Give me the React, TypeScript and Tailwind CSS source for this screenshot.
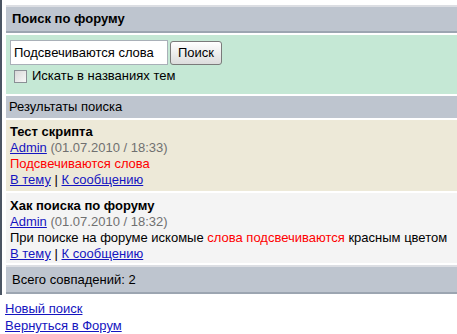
import React from "react";

const bar = "bg-[#bec5cf]";

export default function App() {
  return (
    <div
      className="w-[457px] h-[334px] overflow-hidden bg-white text-[13px] leading-[16px] text-black"
      style={{ fontFamily: '"Liberation Sans", Arial, sans-serif' }}
    >
      <div className="border-l-2 border-[#4b5563] pl-1 pt-[5px] pb-[1px] flex flex-col gap-[2px] w-[470px]">
        <div className={`${bar} border-t-2 border-t-[#dcdee3] border-b-2 border-b-[#9ca5b1] h-[28px] flex items-center pl-[6px] font-bold`}>
          Поиск по форуму
        </div>
        <div className="bg-[#c5e8d5] h-[59px] pt-[5px] pl-1">
          <div className="flex items-center gap-[2px]">
            <div className="w-[158px] h-[25px] bg-white border border-[#a9b0b8] flex items-center pl-[3px] text-[13px]">
              Подсвечиваются слова
            </div>
            <div className="w-[52px] h-[24px] mt-[1px] rounded-[3px] border border-[#7a7a7a] bg-gradient-to-b from-white to-[#dcdcdc] flex items-center justify-center">
              Поиск
            </div>
          </div>
          <div className="flex items-center mt-[3px] pl-[4px]">
            <div className="w-[13px] h-[13px] border border-[#8a8f95] bg-gradient-to-br from-[#d8d8d8] to-[#f8f8f8]" />
            <span className="ml-[5px]">Искать в названиях тем</span>
          </div>
        </div>
        <div className={`${bar} h-[22px] flex items-center pl-[3px]`}>Результаты поиска</div>
        <div className="bg-[#ede9d8] h-[71px] pt-[4px] pl-1">
          <div className="font-bold">Тест скрипта</div>
          <div>
            <a className="text-[#1515c0] underline">Admin</a>
            <span className="text-[#707070]"> (01.07.2010 / 18:33)</span>
          </div>
          <div className="text-[#ff0000]">Подсвечиваются слова</div>
          <div>
            <a className="text-[#1515c0] underline">В тему</a> | <a className="text-[#1515c0] underline">К сообщению</a>
          </div>
        </div>
        <div className="bg-[#f4f4f4] h-[70px] pt-[5px] pl-1">
          <div className="font-bold">Хак поиска по форуму</div>
          <div>
            <a className="text-[#1515c0] underline">Admin</a>
            <span className="text-[#707070]"> (01.07.2010 / 18:32)</span>
          </div>
          <div className="whitespace-nowrap">
            При поиске на форуме искомые <span className="text-[#ff0000]">слова подсвечиваются</span> красным цветом
          </div>
          <div>
            <a className="text-[#1515c0] underline">В тему</a> | <a className="text-[#1515c0] underline">К сообщению</a>
          </div>
        </div>
        <div className={`${bar} border-t-2 border-t-[#dcdee3] border-b-2 border-b-[#9ca5b1] h-[29px] flex items-center pl-[6px]`}>
          Всего совпадений: 2
        </div>
      </div>
      <div className="pl-[5px] pt-[6px]">
        <div>
          <a className="text-[#1515c0] underline">Новый поиск</a>
        </div>
        <div className="mt-[1px]">
          <a className="text-[#1515c0] underline">Вернуться в Форум</a>
        </div>
      </div>
    </div>
  );
}
